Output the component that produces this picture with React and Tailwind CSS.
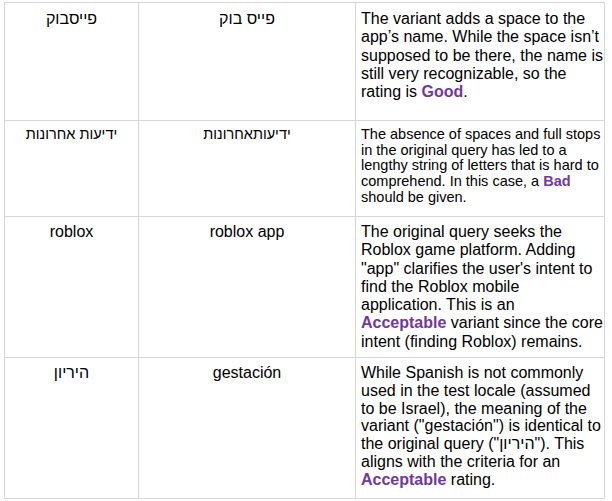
import React from "react";

const P = ({ children }) => (
  <span className="font-bold text-[#7236a6]">{children}</span>
);

const rows = [
  {
    h: "h-[118px]",
    a: "פייסבוק",
    b: "פייס בוק",
    text: "text-[16px] leading-[18.3px] pt-[7px]",
    c: (
      <>
        The variant adds a space to the app’s name. While the space isn’t
        supposed to be there, the name is still very recognizable, so the
        rating is <P>Good</P>.
      </>
    ),
  },
  {
    h: "h-[96px]",
    a: "ידיעות אחרונות",
    b: "ידיעותאחרונות",
    text: "text-[14.5px] leading-[15.7px] pt-[6px]",
    c: (
      <>
        The absence of spaces and full stops in the original query has led to
        a lengthy string of letters that is hard to comprehend. In this case, a{" "}
        <P>Bad</P> should be given.
      </>
    ),
  },
  {
    h: "h-[141px]",
    a: "roblox",
    b: "roblox app",
    text: "text-[16px] leading-[18.3px] pt-[6px]",
    c: (
      <>
        The original query seeks the Roblox game platform. Adding "app"
        clarifies the user's intent to find the Roblox mobile application.
        This is an <P>Acceptable</P> variant since the core intent (finding
        Roblox) remains.
      </>
    ),
  },
  {
    h: "h-[141px]",
    a: "היריון",
    b: "gestación",
    text: "text-[16px] leading-[17.8px] pt-[6px]",
    c: (
      <>
        While Spanish is not commonly used in the test locale (assumed to be
        Israel), the meaning of the variant ("gestación") is identical to the
        original query ("היריון"). This aligns with the criteria for an{" "}
        <P>Acceptable</P> rating.
      </>
    ),
  },
];

export default function App() {
  return (
    <div
      className="w-[612px] h-[501px] bg-white text-black overflow-hidden"
      style={{ fontFamily: '"Liberation Sans", Arial, sans-serif' }}
    >
      <div className="ml-[4px] mt-[2px] w-[601px] border-l border-t border-[#d6d6d6]">
        {rows.map((r, i) => (
          <div key={i} className={`flex ${r.h}`}>
            <div
              className={`w-[134px] shrink-0 border-r border-b border-[#d6d6d6] text-center ${r.text}`}
            >
              <span dir="auto">{r.a}</span>
            </div>
            <div
              className={`w-[217px] shrink-0 border-r border-b border-[#d6d6d6] text-center ${r.text}`}
            >
              <span dir="auto">{r.b}</span>
            </div>
            <div
              className={`w-[249px] shrink-0 border-r border-b border-[#d6d6d6] pl-[5px] pr-[1px] ${r.text}`}
            >
              {r.c}
            </div>
          </div>
        ))}
      </div>
    </div>
  );
}
